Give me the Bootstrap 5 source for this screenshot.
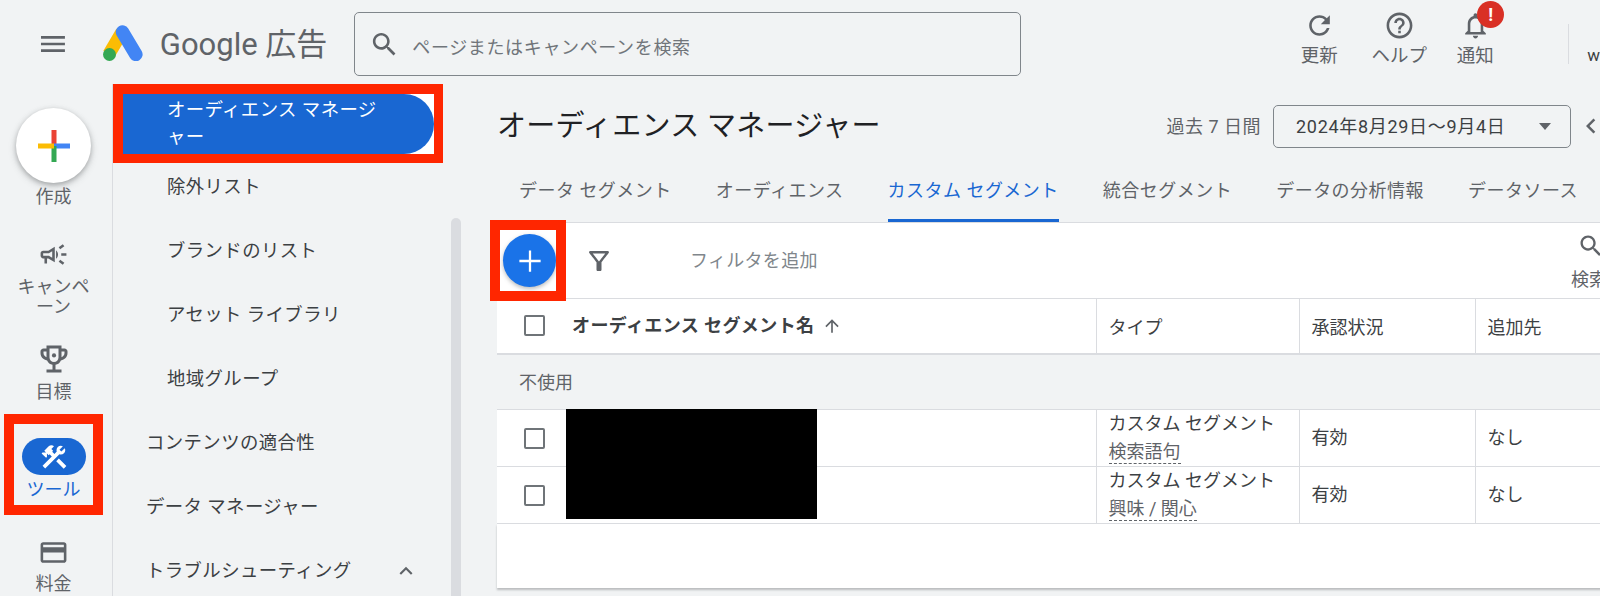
<!DOCTYPE html>
<html lang="ja">
<head>
<meta charset="utf-8">
<title>オーディエンス マネージャー</title>
<link href="https://cdn.jsdelivr.net/npm/bootstrap@5.3.0/dist/css/bootstrap.min.css" rel="stylesheet">
<style>
html,body{height:596px;overflow:hidden}
body{background:#f1f3f4;color:#3c4043;font-family:"Roboto","Noto Sans CJK JP",sans-serif;font-size:18px}
svg{display:block;fill:currentColor}
.topbar{height:84px}
.burger{width:32px;height:32px;margin:28px 0 0 37px;color:#5f6368}
.ads-logo{width:40px;height:36px;margin:25px 0 0 34px}
.brand{margin:22px 0 0 17px;width:178px;font-size:31px;line-height:46px;color:#5f6368;white-space:nowrap}
.searchbox{width:669px;height:64px;margin:12px 0 0 17px;border:1px solid #80868b;border-radius:5px;padding-left:14px;color:#5f6368}
.searchbox svg{width:31px;height:31px}
.searchbox span{margin-left:12px;padding-top:7px;font-size:18px;letter-spacing:.65px;color:#70757a}
.top-action{position:relative;width:80px;text-align:center;color:#5f6368;font-size:18.5px;line-height:22px}
.top-action svg{width:31px;height:31px;margin:10px auto 4px}
.action-tight{margin-left:-4px}
.alert-dot{position:absolute;left:42px;top:1px;width:27px;height:27px;border-radius:50%;background:#d93025;color:#fff;font-weight:700;font-size:18px;line-height:27px}
.top-actions{margin-left:258px}
.userbox{margin:24px 0 0 53px;height:40px;border-left:1px solid #dadce0;padding:20px 0 0 18px;font-size:17px;line-height:22px;color:#3c4043}
.rail{width:113px;height:512px;padding-right:5px;border-right:1px solid #dadce0;text-align:center;color:#5f6368;flex:none}
.rail svg{width:31px;height:31px;margin:0 auto}
.rail-label{font-size:18px;line-height:24px}
.create-btn{width:75px;height:75px;margin:24px auto 2px;border-radius:50%;background:#fff;box-shadow:0 2px 5px rgba(60,64,67,.35),0 3px 9px rgba(60,64,67,.15)}
.create-btn svg{width:34px;height:34px;margin:0}
.rail svg.camp-ico{margin-top:30px}
.camp-label{line-height:20px;margin-top:7px}
.rail svg.goal-ico{width:36px;height:36px;margin-top:24px}
.goal-label{margin-top:3px}
.rail-tools{position:relative;margin-top:34px;color:#1967d2}
.tools-pill{width:64px;height:37px;border-radius:19px;background:#1967d2;color:#fff;margin:0 auto 3px}
.tools-pill svg{width:30px;height:30px}
.ring{position:absolute;border:10px solid #ff2600;pointer-events:none}
.ring-tools{left:4px;top:-24px;width:99px;height:101px}
.rail svg.bill-ico{margin-top:35px}
.bill-label{margin-top:4px}
.menu-col{width:338px;flex:none}
.menu-active{border:10px solid #ff2600;border-right-width:9px;border-bottom-width:9px;background:#fff;width:330px;height:79px}
.menu-active div{height:60px;background:#1967d2;color:#fff;border-radius:0 32px 32px 0;padding:2px 40px 0 44px;font-size:18.4px;line-height:27px;letter-spacing:.4px}
.menu-row{height:48px;margin-bottom:16px;line-height:48px;font-size:18.4px;white-space:nowrap;letter-spacing:.4px;color:#3c4043}
.indent-1{padding-left:54px}
.indent-0{padding-left:33px}
.menu-row svg{width:26px;height:26px;margin-right:32px;color:#5f6368}
.scroll-thumb{width:10px;margin-top:134px;height:378px;background:#dadce0;border-radius:5px 5px 0 0;flex:none}
.workspace{flex:1 1 0;min-width:0;padding-left:36px;overflow:hidden}
.page-title{height:62px;margin-top:11px}
.page-title h1{font-size:29px;font-weight:400;margin:0;line-height:62px;color:#202124;white-space:nowrap;letter-spacing:.3px}
.range-label{margin-left:auto;color:#5f6368;font-size:18px;letter-spacing:.5px;white-space:nowrap}
.range-btn{width:298px;height:43px;margin-left:12px;border:1px solid #80868b;border-radius:5px;padding:0 19px 0 22px;font-size:18px;letter-spacing:.7px;white-space:nowrap}
.tri{width:0;height:0;border:6px solid transparent;border-top:7px solid #5f6368;border-bottom:0;margin-left:auto}
.prev-ico{width:30px;height:30px;margin:0 -6px 0 5px;color:#5f6368;flex:none}
.tabs-row{height:65px;flex-wrap:nowrap;margin-top:0}
.tabs-row .nav-link{padding:0;color:#5f6368;font-size:18px;line-height:68px;height:65px;white-space:nowrap;letter-spacing:.48px;background:none;border:0;border-radius:0;flex:none;margin-left:22px;margin-right:22px}
.tabs-row .nav-link.active{color:#1967d2;background:none;border-bottom:3px solid #1967d2;border-radius:2px 2px 0 0}
.sheet{width:1200px;background:#fff}
.filterbar{position:relative;height:76px;border-top:1px solid #dadce0;color:#5f6368}
.fab{width:53px;height:53px;border-radius:50%;background:#1a73e8;color:#fff;margin-left:6px;box-shadow:0 2px 4px rgba(60,64,67,.35);flex:none}
.fab svg{width:34px;height:34px}
.ring-fab{left:-7px;top:-3px;width:76px;height:81px}
.funnel{width:30px;height:30px;margin-left:28px;flex:none}
.filter-hint{margin-left:76px;font-size:18px;color:#80868b;letter-spacing:.3px}
.search-end{position:absolute;left:1074px;top:9px;width:50px;text-align:left;font-size:18px;line-height:26px;white-space:nowrap}
.search-end svg{width:28px;height:28px;margin:0 0 7px 6px}
.seg-table.table{width:1200px;table-layout:fixed;margin:0;border-collapse:collapse;font-size:18px}
.seg-table.table>*>*>*{padding:0 0 0 12px;border:0;vertical-align:middle;background:#fff;color:#3c4043;box-shadow:none}
.seg-table.table th{font-weight:400}
.seg-table.table .seg-head-cell{height:55px;padding-top:3px;border-top:1px solid #dadce0;border-bottom:2px solid #dadce0;border-left:1px solid #dadce0}
.seg-table.table .seg-head-cell:first-child,.seg-table.table .seg-cell:first-child{border-left:0;padding-left:0;padding-top:0}
.seg-table.table .band{height:56px;background:#f1f3f4;color:#5f6368;padding-left:22px;padding-top:2px;border-bottom:1px solid #dadce0}
.seg-table.table .seg-cell{height:57px;border-bottom:1px solid #dadce0;border-left:1px solid #dadce0;line-height:28px;white-space:nowrap}
.seg-name{display:flex;align-items:center;position:relative}
.tick{width:21px;height:21px;border:2px solid #6f7478;border-radius:2px;margin:0 27px 0 27px;flex:none}
.seg-title{font-weight:700;font-size:18px;letter-spacing:.4px;color:#3c4043;white-space:nowrap}
.sort-up{width:20px;height:20px;margin-left:8px;color:#5f6368;flex:none}
.redact{position:absolute;left:69px;top:-19px;width:251px;height:110px;background:#000}
.dash{color:#5f6368;border-bottom:1.5px dashed #5f6368;padding-bottom:1px}
.sheet-foot{height:64px;background:#fff;box-shadow:0 2px 2px rgba(60,64,67,.3)}
</style>
</head>
<body>
<header class="topbar d-flex">
  <svg class="burger" viewBox="0 0 24 24"><path d="M3 18h18v-2H3v2zm0-5h18v-2H3v2zm0-7v2h18V6H3z"/></svg>
  <svg class="ads-logo" viewBox="0 0 40 36"><line x1="19" y1="7" x2="6" y2="29" stroke="#fbbc04" stroke-width="13"/><line x1="19.5" y1="7" x2="33" y2="29.5" stroke="#4285f4" stroke-width="13.5" stroke-linecap="round"/><circle cx="6.5" cy="29.5" r="6.5" fill="#34a853"/></svg>
  <div class="brand">Google 広告</div>
  <div class="searchbox d-flex align-items-center">
    <svg viewBox="0 0 24 24"><path d="M15.5 14h-.79l-.28-.27C15.41 12.59 16 11.11 16 9.5 16 5.91 13.09 3 9.5 3S3 5.91 3 9.5 5.91 16 9.5 16c1.61 0 3.09-.59 4.23-1.57l.27.28v.79l5 4.99L20.49 19l-4.99-5zm-6 0C7.01 14 5 11.99 5 9.5S7.01 5 9.5 5 14 7.01 14 9.5 11.99 14 9.5 14z"/></svg>
    <span>ページまたはキャンペーンを検索</span>
  </div>
  <div class="top-actions d-flex">
    <div class="top-action"><svg viewBox="0 0 24 24"><path d="M17.65 6.35C16.2 4.9 14.21 4 12 4c-4.42 0-7.99 3.58-7.99 8s3.57 8 7.99 8c3.73 0 6.84-2.55 7.73-6h-2.08c-.82 2.33-3.04 4-5.65 4-3.31 0-6-2.69-6-6s2.69-6 6-6c1.66 0 3.14.69 4.22 1.78L13 11h7V4l-2.35 2.35z"/></svg>更新</div>
    <div class="top-action"><svg viewBox="0 0 24 24"><path d="M11 18h2v-2h-2v2zm1-16C6.48 2 2 6.48 2 12s4.48 10 10 10 10-4.48 10-10S17.52 2 12 2zm0 18c-4.41 0-8-3.59-8-8s3.59-8 8-8 8 3.59 8 8-3.59 8-8 8zm0-14c-2.21 0-4 1.79-4 4h2c0-1.1.9-2 2-2s2 .9 2 2c0 2-3 1.75-3 5h2c0-2.25 3-2.5 3-5 0-2.21-1.79-4-4-4z"/></svg>ヘルプ</div>
    <div class="top-action action-tight"><svg viewBox="0 0 24 24"><path d="M12 22c1.1 0 2-.9 2-2h-4c0 1.1.9 2 2 2zm6-6v-5c0-3.07-1.63-5.64-4.5-6.32V4c0-.83-.67-1.5-1.5-1.5s-1.5.67-1.5 1.5v.68C7.64 5.36 6 7.92 6 11v5l-2 2v1h16v-1l-2-2zm-2 1H8v-6c0-2.48 1.51-4.5 4-4.5s4 2.02 4 4.5v6z"/></svg>通知<span class="alert-dot">!</span></div>
  </div>
  <div class="userbox">w</div>
</header>
<div class="d-flex">
  <nav class="rail">
    <div class="create-btn d-flex align-items-center justify-content-center">
      <svg viewBox="0 0 34 34"><rect x="14.5" y="1" width="5" height="16" fill="#ea4335"/><rect x="17" y="14.5" width="16" height="5" fill="#4285f4"/><rect x="14.5" y="17" width="5" height="16" fill="#34a853"/><rect x="1" y="14.5" width="16" height="5" fill="#fbbc04"/></svg>
    </div>
    <div class="rail-label">作成</div>
    <svg class="camp-ico" viewBox="0 0 24 24"><path d="M18 11v2h4v-2h-4zm-2 6.61c.96.71 2.21 1.65 3.2 2.39.4-.53.8-1.07 1.2-1.6-.99-.74-2.24-1.68-3.2-2.4-.4.54-.8 1.08-1.2 1.61zM20.4 5.6c-.4-.53-.8-1.07-1.2-1.6-.99.74-2.24 1.68-3.2 2.4.4.53.8 1.07 1.2 1.6.96-.72 2.21-1.65 3.2-2.4zM4 9c-1.1 0-2 .9-2 2v2c0 1.1.9 2 2 2h1v4h2v-4h1l5 3V6L8 9H4zm5.03 1.71L11 9.53v4.94l-1.97-1.18-.48-.29H4v-2h4.55l.48-.29zM15.5 12c0-1.33-.58-2.53-1.5-3.35v6.69c.92-.81 1.5-2.01 1.5-3.34z"/></svg>
    <div class="rail-label camp-label">キャンペ<br>ーン</div>
    <svg class="goal-ico" viewBox="0 0 24 24"><path d="M19 5h-2V3H7v2H5c-1.1 0-2 .9-2 2v1c0 2.55 1.92 4.63 4.39 4.94.63 1.5 1.98 2.63 3.61 2.96V19H7v2h10v-2h-4v-3.1c1.63-.33 2.98-1.46 3.61-2.96C19.08 12.63 21 10.55 21 8V7c0-1.1-.9-2-2-2zM5 8V7h2v3.82C5.84 10.4 5 9.3 5 8zm7 6c-1.65 0-3-1.35-3-3V5h6v6c0 1.65-1.35 3-3 3zm7-6c0 1.3-.84 2.4-2 2.82V7h2v1z"/><circle cx="12" cy="9.6" r="1.4"/></svg>
    <div class="rail-label goal-label">目標</div>
    <div class="rail-tools">
      <div class="tools-pill d-flex align-items-center justify-content-center">
        <svg viewBox="0 0 24 24"><path d="M13.78 15.3l6 6 2.11-2.16-6-6zM17.5 10c1.93 0 3.5-1.57 3.5-3.5 0-.58-.16-1.12-.41-1.6l-2.7 2.7-1.49-1.49 2.7-2.7c-.48-.25-1.02-.41-1.6-.41C15.57 3 14 4.57 14 6.5c0 .41.08.8.21 1.16l-1.85 1.85-1.78-1.78.71-.71-1.41-1.41L12 3.49c-1.17-1.17-3.07-1.17-4.24 0L4.22 7.03l1.41 1.41H2.81l-.71.71 3.54 3.54.71-.71V9.15l1.41 1.41.71-.71 1.78 1.78-7.41 7.41 2.12 2.12L16.34 9.79c.36.13.75.21 1.16.21z"/></svg>
      </div>
      <div class="rail-label">ツール</div>
      <span class="ring ring-tools"></span>
    </div>
    <svg class="bill-ico" viewBox="0 0 24 24"><path d="M20 4H4c-1.11 0-1.99.89-1.99 2L2 18c0 1.11.89 2 2 2h16c1.11 0 2-.89 2-2V6c0-1.11-.89-2-2-2zm0 14H4v-6h16v6zm0-10H4V6h16v2z"/></svg>
    <div class="rail-label bill-label">料金</div>
  </nav>
  <div class="menu-col">
    <div class="menu-active"><div>オーディエンス マネージャー</div></div>
    <div class="menu-row indent-1">除外リスト</div>
    <div class="menu-row indent-1">ブランドのリスト</div>
    <div class="menu-row indent-1">アセット ライブラリ</div>
    <div class="menu-row indent-1">地域グループ</div>
    <div class="menu-row indent-0">コンテンツの適合性</div>
    <div class="menu-row indent-0">データ マネージャー</div>
    <div class="menu-row indent-0 d-flex align-items-center justify-content-between">トラブルシューティング<svg viewBox="0 0 24 24"><path d="M12 8l-6 6 1.41 1.41L12 10.83l4.59 4.58L18 14z"/></svg></div>
  </div>
  <div class="scroll-thumb"></div>
  <main class="workspace">
    <div class="page-title d-flex align-items-center">
      <h1>オーディエンス マネージャー</h1>
      <span class="range-label">過去 7 日間</span>
      <div class="range-btn d-flex align-items-center">2024年8月29日～9月4日<span class="tri"></span></div>
      <svg class="prev-ico" viewBox="0 0 24 24"><path d="M15.41 7.41L14 6l-6 6 6 6 1.41-1.41L10.83 12z"/></svg>
    </div>
    <ul class="nav tabs-row">
      <li class="nav-item"><a class="nav-link" href="#">データ セグメント</a></li>
      <li class="nav-item"><a class="nav-link" href="#">オーディエンス</a></li>
      <li class="nav-item"><a class="nav-link active" href="#">カスタム セグメント</a></li>
      <li class="nav-item"><a class="nav-link" href="#">統合セグメント</a></li>
      <li class="nav-item"><a class="nav-link" href="#">データの分析情報</a></li>
      <li class="nav-item"><a class="nav-link" href="#">データソース</a></li>
    </ul>
    <div class="sheet">
      <div class="filterbar d-flex align-items-center">
        <div class="fab d-flex align-items-center justify-content-center"><svg viewBox="0 0 24 24"><path d="M11.2 4.5h1.6v6.7h6.7v1.6h-6.7v6.7h-1.6v-6.7H4.5v-1.6h6.7z"/></svg></div>
        <span class="ring ring-fab"></span>
        <svg class="funnel" viewBox="0 0 24 24"><path d="M7 6h10l-5.01 6.3L7 6zm-2.75-.39C6.27 8.2 10 13 10 13v6c0 .55.45 1 1 1h2c.55 0 1-.45 1-1v-6s3.72-4.8 5.74-7.39c.51-.66.04-1.61-.79-1.61H5.04c-.83 0-1.3.95-.79 1.61z"/></svg>
        <span class="filter-hint">フィルタを追加</span>
        <div class="search-end"><svg viewBox="0 0 24 24"><path d="M15.5 14h-.79l-.28-.27C15.41 12.59 16 11.11 16 9.5 16 5.91 13.09 3 9.5 3S3 5.91 3 9.5 5.91 16 9.5 16c1.61 0 3.09-.59 4.23-1.57l.27.28v.79l5 4.99L20.49 19l-4.99-5zm-6 0C7.01 14 5 11.99 5 9.5S7.01 5 9.5 5 14 7.01 14 9.5 11.99 14 9.5 14z"/></svg>検索</div>
      </div>
      <table class="table seg-table">
        <colgroup><col style="width:599px"><col style="width:203px"><col style="width:176px"><col style="width:222px"></colgroup>
        <thead>
          <tr>
            <th class="seg-head-cell"><div class="seg-name"><span class="tick"></span><span class="seg-title">オーディエンス セグメント名</span><svg class="sort-up" viewBox="0 0 24 24"><path d="M4 12l1.41 1.41L11 7.83V20h2V7.83l5.58 5.59L20 12l-8-8-8 8z"/></svg></div></th>
            <th class="seg-head-cell">タイプ</th><th class="seg-head-cell">承認状況</th><th class="seg-head-cell">追加先</th>
          </tr>
        </thead>
        <tbody>
          <tr><td class="band" colspan="4">不使用</td></tr>
          <tr>
            <td class="seg-cell"><div class="seg-name"><span class="tick"></span><span class="redact"></span></div></td>
            <td class="seg-cell">カスタム セグメント<br><span class="dash">検索語句</span></td><td class="seg-cell">有効</td><td class="seg-cell">なし</td>
          </tr>
          <tr>
            <td class="seg-cell"><div class="seg-name"><span class="tick"></span></div></td>
            <td class="seg-cell">カスタム セグメント<br><span class="dash">興味 / 関心</span></td><td class="seg-cell">有効</td><td class="seg-cell">なし</td>
          </tr>
        </tbody>
      </table>
      <div class="sheet-foot"></div>
    </div>
  </main>
</div>
<script src="https://cdn.jsdelivr.net/npm/bootstrap@5.3.0/dist/js/bootstrap.bundle.min.js"></script>
</body>
</html>
